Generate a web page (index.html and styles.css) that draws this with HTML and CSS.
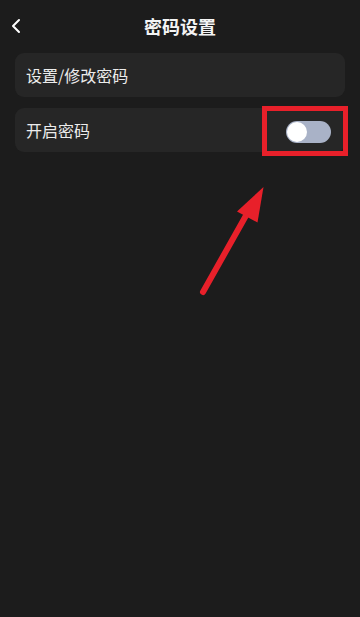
FILE: index.html
```html
<!DOCTYPE html>
<html lang="zh-CN">
<head>
<meta charset="utf-8">
<link rel="stylesheet" href="styles.css">
</head>
<body>
<div class="page">
  <header class="header">
    <svg class="back" width="12" height="16" viewBox="0 0 12 16"><path d="M9 2 L3 8 L9 14" fill="none" stroke="#ffffff" stroke-width="2" stroke-linecap="round" stroke-linejoin="round"/></svg>
    <h1 class="title">密码设置</h1>
  </header>
  <div class="list">
    <div class="item"><span class="label">设置/修改密码</span></div>
    <div class="item">
      <span class="label">开启密码</span>
      <div class="toggle-wrap">
        <div class="toggle"><div class="knob"></div></div>
      </div>
    </div>
  </div>
  <svg class="arrow" width="360" height="617" viewBox="0 0 360 617">
    <line x1="203" y1="292" x2="248" y2="212" stroke="#e8202a" stroke-width="6" stroke-linecap="round"/>
    <polygon points="263.5,187 237,211.5 257.5,222.5" fill="#e8202a"/>
  </svg>
</div>
</body>
</html>
```
FILE: styles.css
```css
* { box-sizing: border-box; }
html, body { margin: 0; padding: 0; }
body {
  background: #1c1c1c;
  font-family: "Noto Sans CJK SC", "Noto Sans", sans-serif;
  color: #ffffff;
}
.page {
  position: relative;
  width: 360px;
  height: 617px;
  overflow: hidden;
  background: #1c1c1c;
}
.header {
  position: relative;
  height: 53px;
  display: flex;
  align-items: center;
  justify-content: center;
}
.back {
  position: absolute;
  left: 10px;
  top: 18px;
}
.title {
  margin: 0;
  font-size: 18px;
  font-weight: 700;
  line-height: 24px;
  margin-top: -1px;
  color: #f4f4f4;
}
.list {
  display: flex;
  flex-direction: column;
  gap: 11px;
  padding: 0 15px;
}
.item {
  height: 44px;
  background: #262626;
  border-radius: 9px;
  display: flex;
  align-items: center;
  justify-content: space-between;
  padding-left: 11px;
  position: relative;
}
.label {
  font-size: 16px;
  line-height: 20px;
  color: #ececec;
}
.toggle-wrap {
  position: absolute;
  left: 247px;
  top: -2px;
  width: 86px;
  height: 50px;
  border: 5px solid #e8202a;
  display: flex;
  align-items: center;
  justify-content: center;
  padding-top: 1px;
}
.toggle {
  width: 45px;
  height: 22px;
  border-radius: 11px;
  background: #a9b2c7;
  position: relative;
  margin-left: 7px;
}
.knob {
  position: absolute;
  left: 1px;
  top: 1px;
  width: 20px;
  height: 20px;
  border-radius: 50%;
  background: #ffffff;
}
.arrow {
  position: absolute;
  left: 0;
  top: 0;
  pointer-events: none;
}
```
